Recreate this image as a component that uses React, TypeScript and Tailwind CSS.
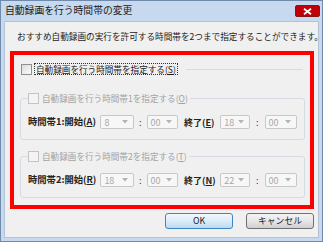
const FONT = "font-['Noto_Sans_CJK_JP','Noto_Sans',sans-serif]"

function CheckBox({ disabled }: { disabled?: boolean }) {
  return (
    <span
      className={
        'inline-block w-[11px] h-[11px] shrink-0 border ' +
        (disabled
          ? 'border-[#c4c4c4] bg-[#f4f4f4]'
          : 'border-[#8e8f8f] bg-linear-to-br from-[#dcdcdc] to-[#fafafa]')
      }
    />
  )
}

function Combo({ value, w }: { value: string; w: string }) {
  return (
    <div
      className={
        'h-[14px] flex items-center justify-between border border-[#c8c8c8] rounded-[2px] bg-[#f7f7f7] pl-[3px] pr-[5px] ' +
        w
      }
    >
      <span className="text-[9px] leading-none text-[#a8a8a8]">{value}</span>
      <svg width="6" height="4" viewBox="0 0 6 4">
        <path d="M0 0h6L3 3.5z" fill="#b4b4b4" />
      </svg>
    </div>
  )
}

function Group({
  legend,
  hot,
  label,
  labelHot,
  start,
  endLabel,
  endHot,
  end,
}: {
  legend: string
  hot: string
  label: string
  labelHot: string
  start: string
  endLabel: string
  endHot: string
  end: string
}) {
  return (
    <div className="border border-[#d5dbe0] rounded-[3px] px-[7px] pb-[10px]">
      <div className="-mt-[7px] h-[12px] flex items-center gap-[3px] w-fit bg-[#f0f0f0] pr-[2px]">
        <CheckBox disabled />
        <span className="text-[8.6px] leading-none text-[#a3a3a3]">
          {legend}(<u>{hot}</u>)
        </span>
      </div>
      <div className="mt-[11px] flex items-center">
        <span className="w-[74px] text-[9.3px] font-bold leading-none text-[#222] whitespace-nowrap">
          {label}(<u>{labelHot}</u>)
        </span>
        <Combo value={start} w="w-[34px]" />
        <span className="w-[13px] text-center text-[9px] leading-none text-[#444]">:</span>
        <Combo value="00" w="w-[32px]" />
        <span className="w-[43px] pl-[6px] text-[9px] font-bold leading-none text-[#222] whitespace-nowrap">
          {endLabel}(<u>{endHot}</u>)
        </span>
        <Combo value={end} w="w-[30px]" />
        <span className="w-[15px] text-center text-[9px] leading-none text-[#444]">:</span>
        <Combo value="00" w="w-[33px]" />
      </div>
    </div>
  )
}

export default function App() {
  return (
    <div className={'w-[323px] h-[242px] bg-[#c6d9ee] border border-[#6f8aab] flex flex-col ' + FONT}>
      {/* Title bar */}
      <div className="h-[20px] flex items-center justify-between pl-[4px] pr-[2px]">
        <span className="text-[9.8px] leading-none text-[#1b1b1b]">自動録画を行う時間帯の変更</span>
        <span className="w-[25px] h-[12px] rounded-[2px] border border-red-900 bg-red-700 flex items-center justify-center">
          <svg width="9" height="7" viewBox="0 0 9 7">
            <path d="M1 0.8l7 5.4M8 0.8l-7 5.4" stroke="#ffffff" strokeWidth="1.8" />
          </svg>
        </span>
      </div>

      {/* Client area */}
      <div className="flex-1 mx-[3px] mb-[3px] bg-[#f0f0f0] border border-[#b4c3d4] flex flex-col pl-[5px] pr-[4px]">
        <p className="mt-[8px] pl-[7px] text-[8.65px] leading-[12px] text-[#1b1b1b] whitespace-nowrap">
          おすすめ自動録画の実行を許可する時間帯を2つまで指定することができます。
        </p>

        <div className="mt-[9px] border-[4px] border-[#ff0000] pt-[8px] pl-[7px] pr-[5px] pb-[7px] flex flex-col">
          <div className="h-[12px] flex items-center pr-[2px]">
            <CheckBox />
            <span className="ml-[2px] px-[1px] border border-dotted border-[#333] text-[8.6px] leading-[10px] text-[#1b1b1b] whitespace-nowrap">
              自動録画を行う時間帯を指定する(<u>S</u>)
            </span>
            <div className="ml-[8px] flex-1 h-px bg-[#d5dbe0]" />
          </div>

          <div className="mt-[23px] -ml-px">
            <Group
              legend="自動録画を行う時間帯1を指定する"
              hot="O"
              label="時間帯1:開始"
              labelHot="A"
              start="8"
              endLabel="終了"
              endHot="E"
              end="18"
            />
          </div>
          <div className="mt-[16px] -ml-px">
            <Group
              legend="自動録画を行う時間帯2を指定する"
              hot="T"
              label="時間帯2:開始"
              labelHot="R"
              start="18"
              endLabel="終了"
              endHot="N"
              end="22"
            />
          </div>
        </div>

        <div className="mt-[4px] flex justify-end gap-[13px]">
          <button className="w-[68px] h-[16px] rounded-[3px] border border-[#3f86c0] bg-linear-to-b from-[#f1f8fd] via-[#dcecf8] to-[#bcdaf0] text-[8.8px] leading-none text-[#1b1b1b]">
            OK
          </button>
          <button className="w-[68px] h-[16px] rounded-[3px] border border-[#707070] bg-linear-to-b from-[#f4f4f4] via-[#e6e6e6] to-[#cfcfcf] text-[8.8px] leading-none text-[#1b1b1b]">
            キャンセル
          </button>
        </div>
      </div>
    </div>
  )
}
